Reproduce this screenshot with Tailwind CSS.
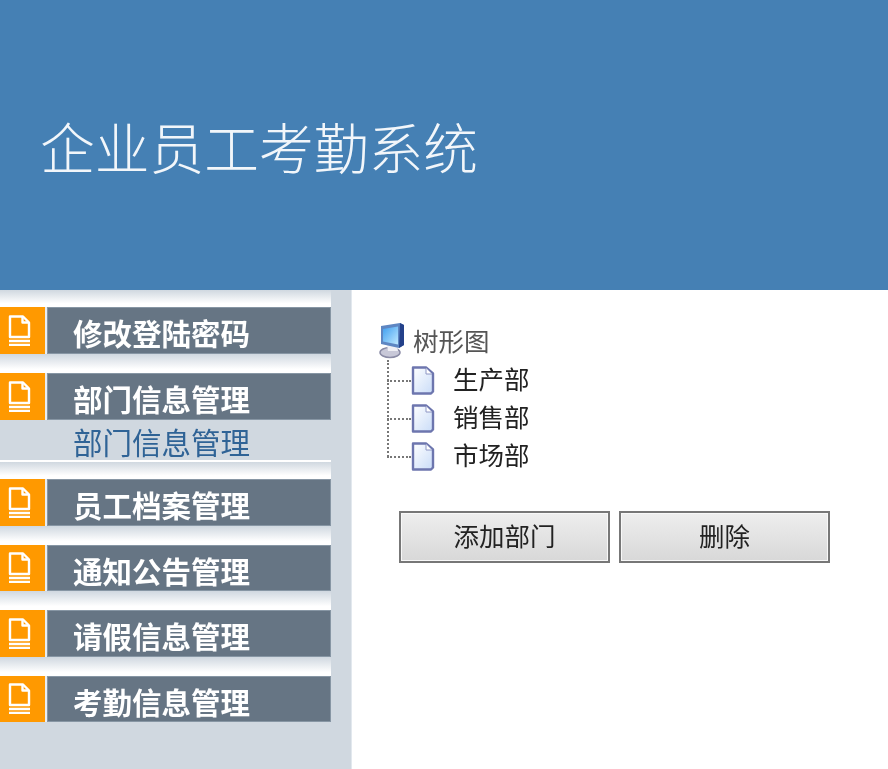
<!DOCTYPE html>
<html lang="zh">
<head>
<meta charset="utf-8">
<title>企业员工考勤系统</title>
<script src="https://cdn.jsdelivr.net/npm/@tailwindcss/browser@4"></script>
</head>
<body class="w-[888px] h-[769px] overflow-hidden bg-white font-['Liberation_Sans','Noto_Sans_CJK_SC',sans-serif]">
  <!-- Header -->
  <header class="h-[290px] bg-[#4580b4] flex items-center pl-[40px]">
    <h1 class="text-[54.75px] leading-none font-light text-[#f2f6fa] mt-[10px] blur-[0.4px]">企业员工考勤系统</h1>
  </header>

  <div class="flex h-[479px]">
    <!-- Sidebar -->
    <aside class="w-[352px] bg-[#d0d8e0] border-r border-[#e2e8ee]">
      <div class="w-[331px]">
        <div class="h-[17px] bg-gradient-to-b from-[#d0d8e0] via-white via-80% to-white"></div>
        <a class="flex h-[47px]">
          <span class="w-[45px] bg-[#ff9900] flex items-center pl-[8px]">
            <svg class="blur-[0.4px]" width="23" height="31" viewBox="0 0 23 31" fill="none" stroke="#fff" stroke-width="2.400" stroke-linejoin="round"><path d="M2 1.500h13l6 6v14.500h-19z"/><path d="M14.500 2v5.500h6"/><path d="M1 26h21M1 30h21"/></svg>
          </span>
          <span class="w-[2px] bg-[#e8edf2]"></span>
          <span class="flex-1 bg-[#667584] border border-[#8796a4] pl-[25px] text-[29.5px] leading-[54px] font-bold text-white overflow-hidden"><span class="block blur-[0.4px]">修改登陆密码</span></span>
        </a>
        <div class="h-[19px] bg-gradient-to-b from-[#d0d8e0] via-white via-80% to-white"></div>
        <a class="flex h-[47px]">
          <span class="w-[45px] bg-[#ff9900] flex items-center pl-[8px]">
            <svg class="blur-[0.4px]" width="23" height="31" viewBox="0 0 23 31" fill="none" stroke="#fff" stroke-width="2.400" stroke-linejoin="round"><path d="M2 1.500h13l6 6v14.500h-19z"/><path d="M14.500 2v5.500h6"/><path d="M1 26h21M1 30h21"/></svg>
          </span>
          <span class="w-[2px] bg-[#e8edf2]"></span>
          <span class="flex-1 bg-[#667584] border border-[#8796a4] pl-[25px] text-[29.5px] leading-[54px] font-bold text-white overflow-hidden"><span class="block blur-[0.4px]">部门信息管理</span></span>
        </a>
        <div class="h-[40px] pl-[73px] text-[29.5px] leading-[47px] text-[#2f6396] overflow-hidden"><span class="block blur-[0.4px]">部门信息管理</span></div>
        <div class="h-[19px] bg-gradient-to-b from-[#d0d8e0] via-white via-80% to-white border-t-2 border-white"></div>
        <a class="flex h-[46.67px]">
          <span class="w-[45px] bg-[#ff9900] flex items-center pl-[8px]">
            <svg class="blur-[0.4px]" width="23" height="31" viewBox="0 0 23 31" fill="none" stroke="#fff" stroke-width="2.400" stroke-linejoin="round"><path d="M2 1.500h13l6 6v14.500h-19z"/><path d="M14.500 2v5.500h6"/><path d="M1 26h21M1 30h21"/></svg>
          </span>
          <span class="w-[2px] bg-[#e8edf2]"></span>
          <span class="flex-1 bg-[#667584] border border-[#8796a4] pl-[25px] text-[29.5px] leading-[54px] font-bold text-white overflow-hidden"><span class="block blur-[0.4px]">员工档案管理</span></span>
        </a>
        <div class="h-[19px] bg-gradient-to-b from-[#d0d8e0] via-white via-80% to-white"></div>
        <a class="flex h-[46.67px]">
          <span class="w-[45px] bg-[#ff9900] flex items-center pl-[8px]">
            <svg class="blur-[0.4px]" width="23" height="31" viewBox="0 0 23 31" fill="none" stroke="#fff" stroke-width="2.400" stroke-linejoin="round"><path d="M2 1.500h13l6 6v14.500h-19z"/><path d="M14.500 2v5.500h6"/><path d="M1 26h21M1 30h21"/></svg>
          </span>
          <span class="w-[2px] bg-[#e8edf2]"></span>
          <span class="flex-1 bg-[#667584] border border-[#8796a4] pl-[25px] text-[29.5px] leading-[54px] font-bold text-white overflow-hidden"><span class="block blur-[0.4px]">通知公告管理</span></span>
        </a>
        <div class="h-[19px] bg-gradient-to-b from-[#d0d8e0] via-white via-80% to-white"></div>
        <a class="flex h-[46.67px]">
          <span class="w-[45px] bg-[#ff9900] flex items-center pl-[8px]">
            <svg class="blur-[0.4px]" width="23" height="31" viewBox="0 0 23 31" fill="none" stroke="#fff" stroke-width="2.400" stroke-linejoin="round"><path d="M2 1.500h13l6 6v14.500h-19z"/><path d="M14.500 2v5.500h6"/><path d="M1 26h21M1 30h21"/></svg>
          </span>
          <span class="w-[2px] bg-[#e8edf2]"></span>
          <span class="flex-1 bg-[#667584] border border-[#8796a4] pl-[25px] text-[29.5px] leading-[54px] font-bold text-white overflow-hidden"><span class="block blur-[0.4px]">请假信息管理</span></span>
        </a>
        <div class="h-[19px] bg-gradient-to-b from-[#d0d8e0] via-white via-80% to-white"></div>
        <a class="flex h-[46px]">
          <span class="w-[45px] bg-[#ff9900] flex items-center pl-[8px]">
            <svg class="blur-[0.4px]" width="23" height="31" viewBox="0 0 23 31" fill="none" stroke="#fff" stroke-width="2.400" stroke-linejoin="round"><path d="M2 1.500h13l6 6v14.500h-19z"/><path d="M14.500 2v5.500h6"/><path d="M1 26h21M1 30h21"/></svg>
          </span>
          <span class="w-[2px] bg-[#e8edf2]"></span>
          <span class="flex-1 bg-[#667584] border border-[#8796a4] pl-[25px] text-[29.5px] leading-[54px] font-bold text-white overflow-hidden"><span class="block blur-[0.4px]">考勤信息管理</span></span>
        </a>
      </div>
    </aside>

    <!-- Main -->
    <main class="flex-1 pl-[27px] pt-[32px]">
      <div class="flex items-center h-[38px]">
        <svg class="mr-[6px] blur-[0.5px]" width="28" height="36" viewBox="0 0 28 36">
          <defs>
            <linearGradient id="screen" x1="0" y1="0" x2="1" y2="1"><stop offset="0" stop-color="#3f9ff0"/><stop offset="1" stop-color="#bfe8ff"/></linearGradient>
            <linearGradient id="sheet" x1="0" y1="0" x2="1" y2="1"><stop offset="0" stop-color="#ffffff"/><stop offset="1" stop-color="#c9dcf8"/></linearGradient>
          </defs>
          <ellipse cx="11" cy="29.500" rx="10" ry="5" fill="#c8c8d8" stroke="#8b8ca6" stroke-width="1.500"/>
          <path d="M8 22h10l1 6H9z" fill="#eeeef4"/>
          <path d="M2 3l19-3 4 2v20l-5 3-18-4z" fill="#5e86c2"/>
          <path d="M21 0l4 2v20l-5 3z" fill="#24418a"/>
          <path d="M4 6l15-2.500v18L4 18.500z" fill="url(#screen)"/>
        </svg>
        <span class="text-[25.5px] text-[#555] blur-[0.4px] mt-[2px]">树形图</span>
      </div>
      <!-- dotted tree connector spans from the root down to the last node -->
      <ul class="relative ml-[8px] pt-[5px] flex flex-col gap-[7px]">
        <li class="absolute left-0 top-0 h-[97px] border-l-2 border-dotted border-[#777]"></li>
        <li class="flex items-center h-[31px]">
          <span class="w-[24px] border-t-2 border-dotted border-[#777]"></span>
          <svg class="blur-[0.5px]" width="24" height="29" viewBox="0 0 24 29"><path d="M2 1.500h13l7 6v18l-2 2H2z" fill="url(#sheet)" stroke="#6d76ae" stroke-width="2.400" stroke-linejoin="round"/><path d="M15 2v6h6" fill="#fff" stroke="#8e96c4"/></svg>
          <span class="ml-[18px] text-[25.5px] text-[#222] blur-[0.4px]">生产部</span>
        </li>
        <li class="flex items-center h-[31px]">
          <span class="w-[24px] border-t-2 border-dotted border-[#777]"></span>
          <svg class="blur-[0.5px]" width="24" height="29" viewBox="0 0 24 29"><path d="M2 1.500h13l7 6v18l-2 2H2z" fill="url(#sheet)" stroke="#6d76ae" stroke-width="2.400" stroke-linejoin="round"/><path d="M15 2v6h6" fill="#fff" stroke="#8e96c4"/></svg>
          <span class="ml-[18px] text-[25.5px] text-[#222] blur-[0.4px]">销售部</span>
        </li>
        <li class="flex items-center h-[31px]">
          <span class="w-[24px] border-t-2 border-dotted border-[#777]"></span>
          <svg class="blur-[0.5px]" width="24" height="29" viewBox="0 0 24 29"><path d="M2 1.500h13l7 6v18l-2 2H2z" fill="url(#sheet)" stroke="#6d76ae" stroke-width="2.400" stroke-linejoin="round"/><path d="M15 2v6h6" fill="#fff" stroke="#8e96c4"/></svg>
          <span class="ml-[18px] text-[25.5px] text-[#222] blur-[0.4px]">市场部</span>
        </li>
      </ul>
      <div class="flex gap-[9px] ml-[20px] mt-[39px]">
        <button class="w-[211px] h-[52px] border-2 border-[#777] bg-gradient-to-b from-[#eeeeee] to-[#d8d8d8] text-[25.5px] text-[#222] shadow-[inset_0_0_0_1px_#f8f8f8]"><span class="block blur-[0.4px]">添加部门</span></button>
        <button class="w-[211px] h-[52px] border-2 border-[#777] bg-gradient-to-b from-[#eeeeee] to-[#d8d8d8] text-[25.5px] text-[#222] shadow-[inset_0_0_0_1px_#f8f8f8]"><span class="block blur-[0.4px]">删除</span></button>
      </div>
    </main>
  </div>
</body>
</html>
